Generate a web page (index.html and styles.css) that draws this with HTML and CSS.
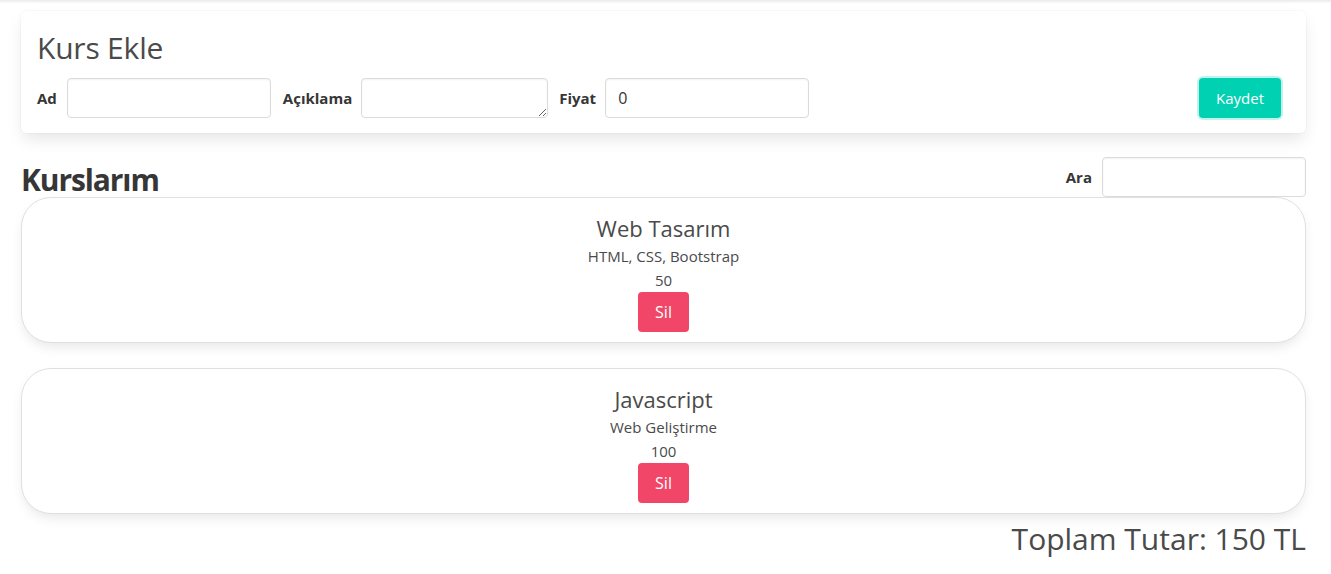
FILE: index.html
```html
<!DOCTYPE html>
<html lang="tr">
<head>
<meta charset="utf-8">
<title>Kurslar</title>
<link rel="stylesheet" href="styles.css">
</head>
<body>
<div class="topbar"></div>
<main class="page">
  <section class="box">
    <h1 class="box-title">Kurs Ekle</h1>
    <form class="form-row">
      <label class="label">Ad</label>
      <input class="input w204" type="text">
      <label class="label ml12 mr9">Açıklama</label>
      <textarea class="input textarea"></textarea>
      <label class="label ml11 mr9">Fiyat</label>
      <input class="input w204 num" type="text" value="0">
      <button type="button" class="button primary">Kaydet</button>
    </form>
  </section>

  <div class="list-head">
    <h2 class="list-title">Kurslarım</h2>
    <div class="search">
      <label class="label">Ara</label>
      <input class="input w204" type="text">
    </div>
  </div>

  <div class="card">
    <div class="card-title">Web Tasarım</div>
    <div class="card-text">HTML, CSS, Bootstrap</div>
    <div class="card-text price">50</div>
    <button type="button" class="button danger">Sil</button>
  </div>

  <div class="card">
    <div class="card-title">Javascript</div>
    <div class="card-text">Web Geliştirme</div>
    <div class="card-text price">100</div>
    <button type="button" class="button danger">Sil</button>
  </div>

  <div class="total">Toplam Tutar: 150 TL</div>
</main>
</body>
</html>
```

FILE: styles.css
```css
* { box-sizing: border-box; }
html, body { margin: 0; padding: 0; background: #fff; }
body {
  font-family: "Open Sans", "Noto Sans", "Liberation Sans", sans-serif;
  color: #4a4a4a;
  font-size: 16px;
  line-height: 1.5;
}
.topbar {
  height: 3px;
  background: linear-gradient(#ebebeb, #fafafa);
}
.page {
  padding: 8px 25px 0 21px;
}
.box {
  background: #fff;
  border-radius: 6px;
  box-shadow: 0 0.5em 1em -0.125em rgba(10,10,10,0.1), 0 0 0 1px rgba(10,10,10,0.02);
  padding: 16px 25px 15px 16px;
}
.box-title {
  margin: 3px 0 12px 0;
  font-size: 30px;
  font-weight: 400;
  line-height: 36px;
  color: #4a4a4a;
  letter-spacing: -0.2px;
}
.form-row {
  display: flex;
  align-items: center;
  margin: 0;
}
.label {
  font-weight: 700;
  color: #363636;
  font-size: 15px;
  margin-right: 10px;
}
.ml12 { margin-left: 12px; }
.ml11 { margin-left: 11px; }
.mr9 { margin-right: 9px; }
.input {
  height: 40px;
  border: 1px solid #dbdbdb;
  border-radius: 4px;
  background: #fff;
  font-family: inherit;
  font-size: 16px;
  color: #363636;
  padding: 6px 11px;
  box-shadow: inset 0 0.0625em 0.125em rgba(10,10,10,0.05);
  outline: none;
}
.w204 { width: 204px; }
.textarea {
  width: 187px;
  resize: vertical;
  display: block;
  min-height: 40px;
}
.num { padding-left: 12px; }
.button {
  height: 40px;
  border: 1px solid transparent;
  border-radius: 4px;
  font-family: inherit;
  font-size: 15px;
  color: #fff;
  padding: 0 15px;
  cursor: pointer;
}
.primary {
  margin-left: auto;
  width: 82px;
  background: #00d1b2;
  box-shadow: 0 0 0 2px rgba(0,209,178,0.25);
}
.danger {
  width: 51px;
  padding: 0;
  font-size: 16px;
  background: #f14668;
}
.list-head {
  display: flex;
  justify-content: space-between;
  align-items: flex-end;
  margin-top: 24px;
}
.list-title {
  margin: 0;
  font-size: 30px;
  font-weight: 700;
  line-height: 34px;
  color: #363636;
  letter-spacing: -1.1px;
}
.search {
  display: flex;
  align-items: center;
}
.card {
  background: #fff;
  border: 1px solid #e0e0e0;
  border-radius: 30px;
  box-shadow: 0 6px 14px -4px rgba(10,10,10,0.12);
  padding: 16px 20px 10px;
  margin-bottom: 25px;
  display: flex;
  flex-direction: column;
  align-items: center;
  text-align: center;
}
.card + .card + .total { margin-top: -18px; }
.card-title {
  font-size: 22px;
  line-height: 28px;
  margin-bottom: 3px;
  color: #4a4a4a;
}
.card-text {
  font-size: 15px;
  line-height: 23px;
  color: #4a4a4a;
}
.card-text.price { line-height: 24px; }
.total {
  text-align: right;
  font-size: 30px;
  line-height: 36px;
  color: #4a4a4a;
}
```
